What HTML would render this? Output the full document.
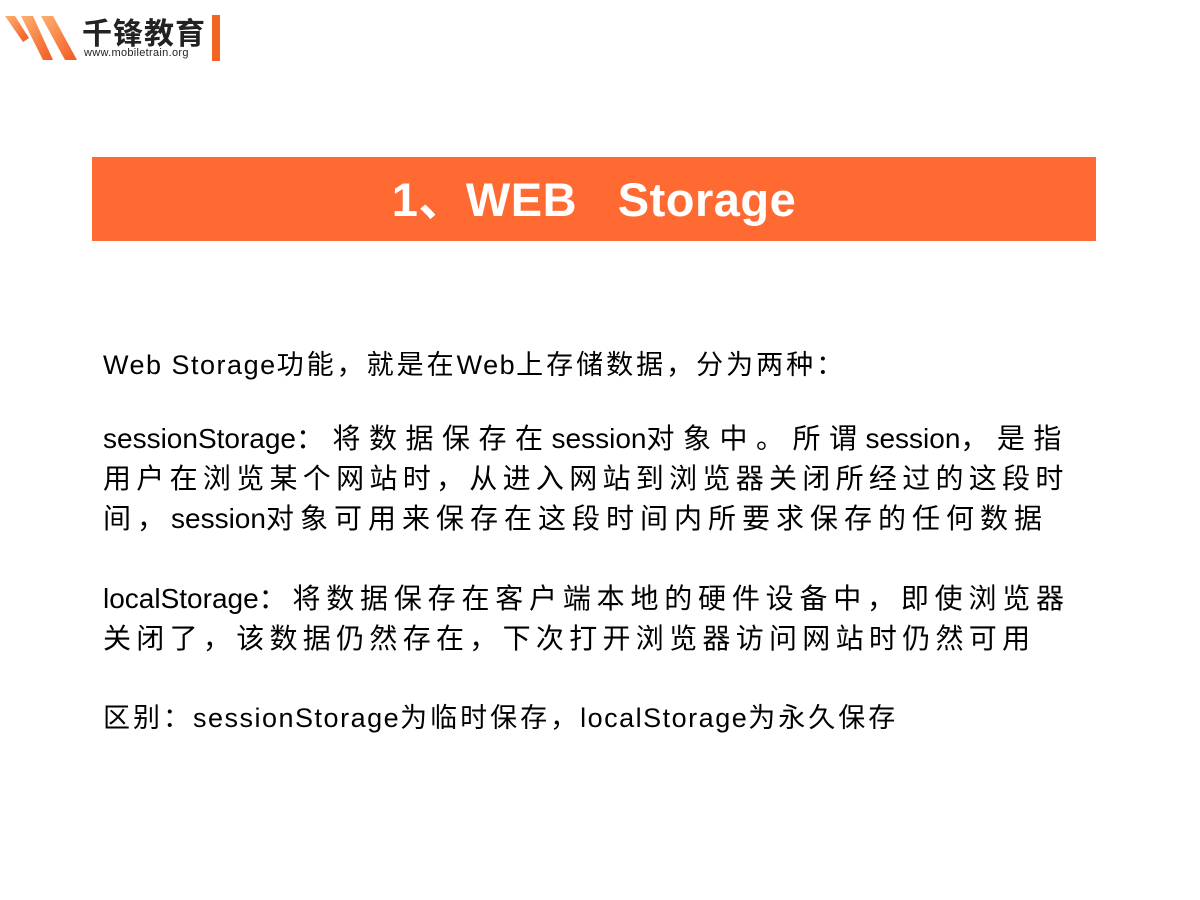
<!DOCTYPE html>
<html><head><meta charset="utf-8"><style>
body{margin:0;width:1200px;height:900px;background:#fff;position:relative;overflow:hidden;font-family:"Liberation Sans","Noto Sans CJK SC",sans-serif;color:#000}
.abs{position:absolute;white-space:nowrap}
.bar{position:absolute;left:92px;top:157px;width:1004px;height:84px;background:#ff6a33;color:#fff;font-weight:bold;font-size:47px;text-align:center;line-height:86px;letter-spacing:0.5px}
.s{font-size:27px;letter-spacing:1.5px}
.s .k{letter-spacing:3px}
.p{font-size:28px}
.c{letter-spacing:6px}
</style></head><body>
<svg class="abs" style="left:3px;top:12px" width="76" height="52" viewBox="0 0 76 52">
<defs><linearGradient id="g" x1="0" y1="0" x2="1" y2="1"><stop offset="0" stop-color="#ffb070"/><stop offset="1" stop-color="#f05a22"/></linearGradient></defs>
<polygon points="2,4 12,4 26,26 20,30" fill="url(#g)"/>
<polygon points="18,4 30,4 50,48 40,48" fill="url(#g)"/>
<polygon points="38,4 50,4 74,48 62,48" fill="url(#g)"/>
</svg>
<div class="abs" style="left:82px;top:9px;font-size:30px;font-weight:bold;color:#222;letter-spacing:1px">千锋教育</div>
<div class="abs" style="left:84px;top:47px;font-size:11px;color:#222;letter-spacing:0.3px">www.mobiletrain.org</div>
<div class="abs" style="left:212px;top:15px;width:8px;height:46px;background:#f26522"></div>
<div class="bar">1、WEB&nbsp;&nbsp;&nbsp;Storage</div>
<div class="abs s" style="left:103px;top:343px">Web Storage<span class="k">功能，就是在</span>Web<span class="k">上存储数据，分为两种：</span></div>
<div class="abs p" style="left:103px;top:417px">sessionStorage<span class="c" style="letter-spacing:8.5px">：将数据保存在</span>session<span class="c" style="letter-spacing:8.5px">对象中。所谓</span>session<span class="c" style="letter-spacing:8.5px">，是指</span></div>
<div class="abs p" style="left:103px;top:457px"><span class="c" style="letter-spacing:5.3px">用户在浏览某个网站时，从进入网站到浏览器关闭所经过的这段时</span></div>
<div class="abs p" style="left:103px;top:497px"><span class="c">间，</span>session<span class="c">对象可用来保存在这段时间内所要求保存的任何数据</span></div>
<div class="abs p" style="left:103px;top:577px">localStorage<span class="c" style="letter-spacing:5.8px">：将数据保存在客户端本地的硬件设备中，即使浏览器</span></div>
<div class="abs p" style="left:103px;top:617px"><span class="c" style="letter-spacing:5.3px">关闭了，该数据仍然存在，下次打开浏览器访问网站时仍然可用</span></div>
<div class="abs s" style="left:103px;top:696px"><span class="k">区别：</span>sessionStorage<span class="k">为临时保存，</span>localStorage<span class="k">为永久保存</span></div>
</body></html>
